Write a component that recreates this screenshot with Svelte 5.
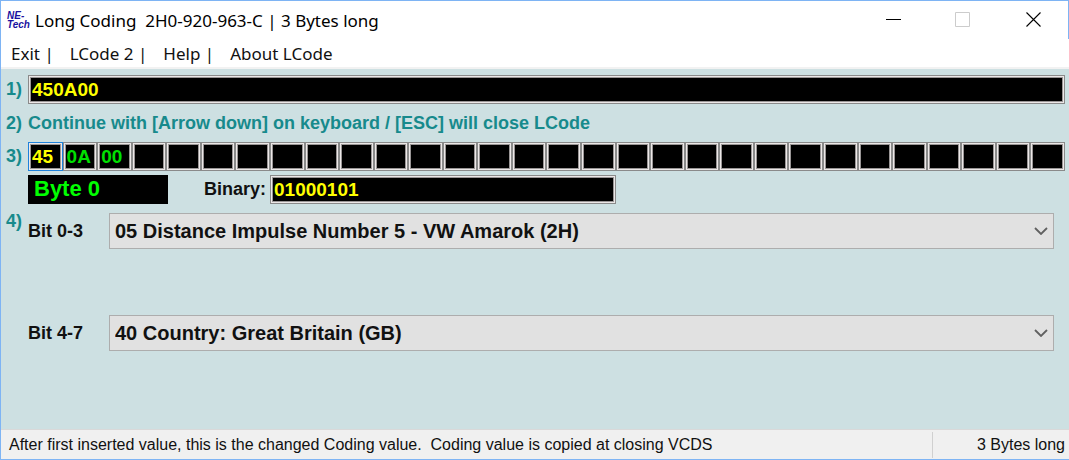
<script>
  const menu = ["Exit |", "LCode 2 |", "Help |", "About LCode"];

  let coding = $state("450A00");
  let binary = $state("01000101");
  let bytes = $state(["45", "0A", "00", ...Array(27).fill("")]);
  let active = $state(0);

  const bitGroups = [
    { id: "low", label: "Bit 0-3", options: ["05 Distance Impulse Number 5 - VW Amarok (2H)"] },
    { id: "high", label: "Bit 4-7", options: ["40 Country: Great Britain (GB)"] },
  ];
</script>

<svelte:head>
  <title>Long Coding</title>
</svelte:head>

<div class="window">
  <header class="titlebar">
    <div class="logo"><span>NE-</span><span>Tech</span></div>
    <h1>Long Coding&nbsp; 2H0-920-963-C | 3 Bytes long</h1>
    <button class="control" aria-label="Minimize">
      <svg width="16" height="16" viewBox="0 0 16 16"><path d="M1 7.5h15" stroke="#000" /></svg>
    </button>
    <button class="control" aria-label="Maximize" disabled>
      <svg width="16" height="16" viewBox="0 0 16 16"><path d="M.5 .5h14v14H.5z" fill="none" stroke="#ccc" /></svg>
    </button>
    <button class="control" aria-label="Close">
      <svg width="16" height="16" viewBox="0 0 16 16"><path d="M1.500 .5l14 14M15.500 .5l-14 14" stroke="#000" stroke-width="1.100" /></svg>
    </button>
  </header>

  <nav class="menu">
    {#each menu as item}
      <button>{item}</button>
    {/each}
  </nav>

  <main>
    <div class="row">
      <label class="step" for="coding">1)</label>
      <input id="coding" class="field" bind:value={coding} />
    </div>

    <div class="row hint">
      <span class="step">2)</span>
      <p>Continue with [Arrow down] on keyboard / [ESC] will close LCode</p>
    </div>

    <div class="row">
      <span class="step">3)</span>
      <div class="bytes">
        {#each bytes as _, i}
          <input
            class="field byte"
            class:active={i === active}
            aria-label="Byte {i}"
            maxlength="2"
            bind:value={bytes[i]}
            onfocus={() => (active = i)}
          />
        {/each}
      </div>
    </div>

    <div class="row detail">
      <output class="current">Byte {active}</output>
      <label for="binary">Binary:</label>
      <input id="binary" class="field binary" bind:value={binary} />
    </div>

    {#each bitGroups as group, i}
      <div class="row bits">
        <span class="step top">{i === 0 ? "4)" : ""}</span>
        <label class="bit-label" for={group.id}>{group.label}</label>
        <div class="combo">
          <select id={group.id}>
            {#each group.options as option}
              <option>{option}</option>
            {/each}
          </select>
          <svg width="14" height="8" viewBox="0 0 14 8"><path d="M1 1l6 6 6-6" fill="none" stroke="#606060" stroke-width="1.800" /></svg>
        </div>
      </div>
    {/each}
  </main>

  <footer>
    <span class="message">After first inserted value, this is the changed Coding value.&nbsp; Coding value is copied at closing VCDS</span>
    <span class="length">3 Bytes long</span>
  </footer>
</div>

<style>
  :global(body) {
    margin: 0;
    background: #fff;
  }

  .window {
    box-sizing: border-box;
    min-height: 100vh;
    display: flex;
    flex-direction: column;
    border: 1px solid #7eb4f4;
    border-right: 0;
    font-family: "Liberation Sans", Arial, sans-serif;
    color: #111;
  }

  button {
    border: 0;
    padding: 0;
    background: none;
    font: inherit;
    color: inherit;
  }

  .titlebar {
    display: flex;
    align-items: center;
    height: 38px;
    padding-left: 6px;
    border-right: 1px solid #7eb4f4;
    background: #fff;
  }

  .logo {
    display: flex;
    flex-direction: column;
    width: 28px;
    font-size: 10px;
    line-height: 9px;
    font-weight: bold;
    font-style: italic;
    color: #1a12a0;
  }

  h1 {
    flex: 1;
    margin: 0;
    font-family: "Noto Sans", "Segoe UI", sans-serif;
    font-size: 17px;
    font-weight: normal;
    color: #000;
  }

  .control {
    display: flex;
    align-items: center;
    justify-content: center;
    width: 70px;
    height: 38px;
  }

  .menu {
    display: flex;
    gap: 16px;
    height: 28px;
    padding: 0 10px;
    border-bottom: 2px solid #f2f2f2;
    background: #fff;
    font-family: "Noto Sans", "Segoe UI", sans-serif;
    font-size: 17px;
  }

  main {
    flex: 1;
    padding: 6px 4px 0 5px;
    background: #cde0e2;
    font-size: 18px;
    font-weight: bold;
  }

  .row {
    display: flex;
    align-items: center;
  }

  .step {
    flex: none;
    width: 22px;
    color: #178a8c;
  }

  .top {
    align-self: flex-start;
    line-height: 16px;
  }

  .hint {
    height: 38px;
    color: #178a8c;
  }

  .hint p {
    margin: 0;
  }

  .field {
    box-sizing: border-box;
    flex: 1;
    min-width: 0;
    height: 29px;
    border: 1px solid #8a8a8a;
    border-radius: 0;
    padding: 0 3px;
    outline: 0;
    background: #000;
    box-shadow: inset 0 0 0 1px #ece8e8, inset 0 0 0 2px #9a9696;
    font: inherit;
    font-size: 19px;
    color: #ff0;
  }

  .bytes {
    display: grid;
    flex: 1;
    grid-template-columns: repeat(30, minmax(0, 1fr));
  }

  .byte {
    width: 100%;
    padding: 0 0 0 3px;
    color: #00e000;
  }

  .active {
    border-color: #1e82dc;
    color: #ff0;
  }

  .detail {
    padding: 4px 0 9px 22px;
  }

  .current {
    box-sizing: border-box;
    width: 140px;
    height: 29px;
    padding-left: 6px;
    background: #000;
    font-size: 22px;
    line-height: 27px;
    color: #0f0;
  }

  .detail label {
    width: 98px;
    padding-right: 4px;
    text-align: right;
  }

  .binary {
    flex: none;
    width: calc(100% / 3);
  }

  .bits {
    margin-bottom: 66px;
    padding-right: 11px;
  }

  .bit-label {
    width: 81px;
  }

  .combo {
    flex: 1;
    display: grid;
    align-items: center;
  }

  .combo select,
  .combo svg {
    grid-area: 1 / 1;
  }

  .combo svg {
    justify-self: end;
    margin-right: 6px;
    pointer-events: none;
  }

  select {
    appearance: none;
    height: 36px;
    border: 1px solid #adadad;
    border-radius: 0;
    padding: 0 5px;
    background: #e1e1e1;
    font: inherit;
    font-size: 20px;
    color: #111;
  }

  footer {
    display: flex;
    align-items: center;
    height: 29px;
    border-top: 1px solid #d9d9d9;
    background: #f0f0f0;
    font-size: 16px;
  }

  .message {
    flex: 1;
    padding-left: 8px;
  }

  .length {
    width: 132px;
    padding-right: 4px;
    border-left: 1px solid #d0d0d0;
    line-height: 26px;
    text-align: right;
  }
</style>
